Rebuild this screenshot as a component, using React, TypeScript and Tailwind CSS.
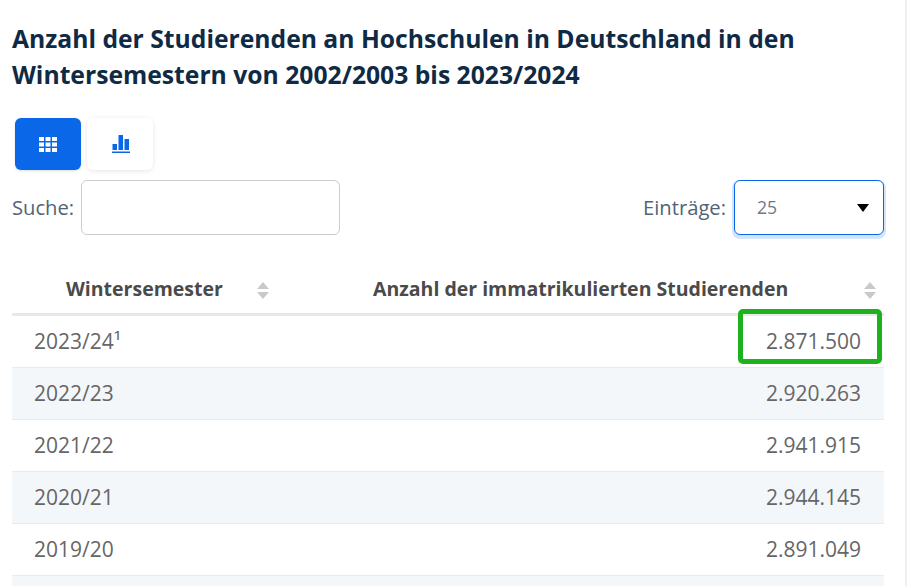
const rows = [
  { year: '2023/24¹', value: '2.871.500', highlight: true },
  { year: '2022/23', value: '2.920.263' },
  { year: '2021/22', value: '2.941.915' },
  { year: '2020/21', value: '2.944.145' },
  { year: '2019/20', value: '2.891.049' },
];

function SortIcon() {
  return (
    <svg width="12" height="17" viewBox="0 0 12 17" className="shrink-0 -translate-y-px fill-[#c9c9c9]">
      <path d="M6 0 L12 7 L0 7 Z" />
      <path d="M0 10 L12 10 L6 17 Z" />
    </svg>
  );
}

function GridIcon() {
  return (
    <svg width="18" height="15" viewBox="0 0 18 15" className="fill-white">
      {[0, 5.5, 11].map((y) =>
        [0, 6.5, 13].map((x) => <rect key={`${x}-${y}`} x={x} y={y} width="5" height="4" />)
      )}
    </svg>
  );
}

function BarsIcon() {
  return (
    <svg width="18" height="18" viewBox="0 0 18 18" className="translate-x-px fill-[#0a68e8]">
      <rect x="0.5" y="9" width="4.5" height="6" />
      <rect x="6.5" y="0" width="4.5" height="15" />
      <rect x="12.5" y="4" width="4.5" height="11" />
      <rect x="0" y="16.5" width="18" height="1.5" />
    </svg>
  );
}

export default function App() {
  return (
    <div className="h-[586px] w-[907px] overflow-hidden border-r-2 border-[#f0f0f0] bg-white pl-3 pr-[21px] pt-[21px] font-['Open_Sans',sans-serif]">
      <h1 className="text-[24.7px] font-bold leading-9 text-[#0f2a44]">
        Anzahl der Studierenden an Hochschulen in Deutschland in den Wintersemestern von 2002/2003 bis 2023/2024
      </h1>

      <div className="mt-[25px] flex gap-1.5 pl-[3px]">
        <button type="button" className="flex h-[52px] w-[66px] items-center justify-center rounded-md bg-[#0a68e8] shadow-sm">
          <GridIcon />
        </button>
        <button type="button" className="flex h-[52px] w-[66px] items-center justify-center rounded-md bg-white shadow-[0_1px_5px_rgba(0,0,0,0.1)]">
          <BarsIcon />
        </button>
      </div>

      <div className="mt-[10px] flex items-center justify-between text-[20.2px] text-[#4f6478]">
        <div className="flex items-center gap-[7px]">
          <span>Suche:</span>
          <div className="h-[55px] w-[259px] rounded-md border border-[#cccccc] bg-white" />
        </div>
        <div className="flex items-center gap-[8px]">
          <span>Einträge:</span>
          <div className="flex h-[55px] w-[150px] items-center justify-between rounded-md border border-[#0a68e8] bg-white pl-[22px] pr-[14px] text-[17.6px] text-[#6c7a87] shadow-[0_2px_0_2px_rgba(10,104,232,0.18)]">
            <span>25</span>
            <svg width="12" height="8" viewBox="0 0 12 8" className="fill-black">
              <path d="M0 0 L12 0 L6 8 Z" />
            </svg>
          </div>
        </div>
      </div>

      <div className="mt-[35px] flex h-[43px] items-center text-[19.5px] font-bold text-[#4a4a4a]">
        <div className="flex w-[257px] items-center justify-between pl-[54px]">
          <span className="-translate-y-[3px]">Wintersemester</span>
          <SortIcon />
        </div>
        <div className="flex flex-1 items-center justify-between pl-[104px] pr-2">
          <span className="-translate-y-[3px]">Anzahl der immatrikulierten Studierenden</span>
          <SortIcon />
        </div>
      </div>
      <div className="h-[3px] bg-[#e8e8e8]" />

      {rows.map((row, i) => (
        <div
          key={row.year}
          className={`relative flex h-[52px] items-center justify-between border-b border-[#e8ebee] pl-[22px] pr-[23px] text-[21px] text-[#666666] ${i % 2 === 1 ? 'bg-[#f4f7fa]' : 'bg-white'}`}
        >
          <span>{row.year}</span>
          <span>{row.value}</span>
          {row.highlight && (
            <div className="absolute -top-[7px] right-[2px] h-[55px] w-[144px] rounded-[5px] border-[5px] border-[#1db11d]" />
          )}
        </div>
      ))}
      <div className="h-[52px] bg-[#f4f7fa]" />
    </div>
  );
}
